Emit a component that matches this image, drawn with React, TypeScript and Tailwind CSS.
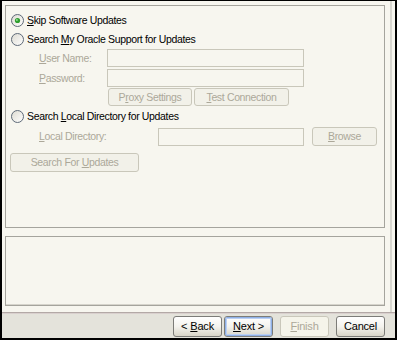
import React from 'react';

const DIS = 'text-[#aca899]';

const Radio = ({ checked }: { checked?: boolean }) => (
  <svg width="13" height="13" viewBox="0 0 13 13" className="shrink-0">
    <defs>
      <linearGradient id={checked ? 'rg1' : 'rg2'} x1="0" y1="0" x2="1" y2="1">
        <stop offset="0" stopColor="#dcdad0" />
        <stop offset="1" stopColor="#ffffff" />
      </linearGradient>
    </defs>
    <circle cx="6.5" cy="6.5" r="6" fill={`url(#${checked ? 'rg1' : 'rg2'})`} stroke="#5e6a78" strokeWidth="1" />
    {checked && (
      <>
        <circle cx="6.5" cy="6.5" r="2.6" fill="#2f9e2f" />
        <circle cx="5.9" cy="5.9" r="1" fill="#8fdc8f" />
      </>
    )}
  </svg>
);

type BtnProps = { children: React.ReactNode; className?: string; disabled?: boolean; focus?: boolean };

const PanelButton = ({ children, className }: BtnProps) => (
  <div
    className={`flex items-center justify-center rounded-[3px] border border-[#c9c7ba] bg-[#f2f1e9] ${DIS} ${className ?? ''}`}
  >
    <span>{children}</span>
  </div>
);

const WizButton = ({ children, disabled, focus }: BtnProps) => (
  <div
    className={`flex h-[21px] w-[49px] items-center justify-center rounded-[3px] border ${
      disabled
        ? 'border-[#c9c7ba] bg-[#f5f4ea] text-[#aca899]'
        : 'border-[#7c7c78] bg-gradient-to-b from-white via-[#f4f3ee] to-[#d8d5c8] text-black'
    }`}
  >
    <div
      className={`flex h-full w-full items-center justify-center rounded-[2px] ${
        focus ? 'border border-[#8fb0e6] shadow-[inset_0_0_0_1px_#bcd0f2]' : ''
      }`}
    >
      {children}
    </div>
  </div>
);

const Input = ({ className }: { className?: string }) => (
  <div className={`h-[18px] border border-[#c9c7ba] bg-[#f7f6ef] ${className ?? ''}`} />
);

export default function App() {
  return (
    <div className="flex h-[340px] w-[397px] flex-col border-b-2 border-l-2 border-r-2 border-t border-black bg-[#f7f6ef] font-['Liberation_Sans',Arial,sans-serif] text-[10.5px] tracking-[-0.35px] text-black leading-none">
      {/* main area */}
      <div className="flex h-[311px]">
        <div className="flex w-[388px] flex-col pl-[3px] pt-[4px]">
          {/* options panel */}
          <div className="flex h-[223px] w-[380px] flex-col border border-[#a5a49d] pl-[5px]">
            <div className="mt-[5px] flex h-[18px] items-center gap-[2px]">
              <Radio checked />
              <span className="ml-[1px]">
                <u>S</u>kip Software Updates
              </span>
            </div>
            <div className="flex h-[20px] items-center gap-[2px]">
              <Radio />
              <span className="ml-[1px]">
                Search <u>M</u>y Oracle Support for Updates
              </span>
            </div>
            <div className={`flex h-[18px] items-center ${DIS}`}>
              <span className="w-[96px] pl-[28px]">
                <u>U</u>ser Name:
              </span>
              <Input className="w-[197px]" />
            </div>
            <div className={`mt-[2px] flex h-[18px] items-center ${DIS}`}>
              <span className="w-[96px] pl-[28px]">
                <u>P</u>assword:
              </span>
              <Input className="w-[197px]" />
            </div>
            <div className="ml-[97px] mt-[1px] flex h-[18px] gap-[2px]">
              <PanelButton className="w-[84px]">
                P<u>r</u>oxy Settings
              </PanelButton>
              <PanelButton className="w-[95px]">
                <u>T</u>est Connection
              </PanelButton>
            </div>
            <div className="flex h-[21px] items-center gap-[2px]">
              <Radio />
              <span className="ml-[1px]">
                Search <u>L</u>ocal Directory for Updates
              </span>
            </div>
            <div className={`flex h-[19px] items-center ${DIS}`}>
              <span className="w-[147px] pl-[28px]">
                <u>L</u>ocal Directory:
              </span>
              <Input className="w-[146px]" />
              <PanelButton className="ml-[8px] h-[19px] w-[65px]">
                <u>B</u>rowse
              </PanelButton>
            </div>
            <PanelButton className="-ml-[1px] mt-[7px] h-[19px] w-[129px]">
              Search For <u>U</u>pdates
            </PanelButton>
          </div>
          {/* message panel */}
          <div className="mt-[8px] h-[70px] w-[380px] border border-[#a5a49d] shadow-[inset_0_-1px_0_#d6d4cc]" />
        </div>
        <div className="w-[2px] bg-[#d8d7d0]" />
        <div className="w-[3px] bg-[#f7f6ef]" />
      </div>
      {/* separator */}
      <div className="h-px bg-[#b3a9a6]" />
      <div className="h-px bg-[#d9d0ce]" />
      {/* button bar */}
      <div className="flex flex-1 items-center justify-end bg-[#e4e3db] pr-[10px] pt-[1px] text-[11px] tracking-[-0.2px]">
        <div className="flex items-center">
          <WizButton>
            {'< '}
            <u className="ml-[3px]">B</u>ack
          </WizButton>
          <div className="w-[2px]" />
          <WizButton focus>
            <u>N</u>ext{' >'}
          </WizButton>
          <div className="w-[7px]" />
          <WizButton disabled>
            <u>F</u>inish
          </WizButton>
          <div className="w-[7px]" />
          <WizButton>Cancel</WizButton>
        </div>
      </div>
    </div>
  );
}
